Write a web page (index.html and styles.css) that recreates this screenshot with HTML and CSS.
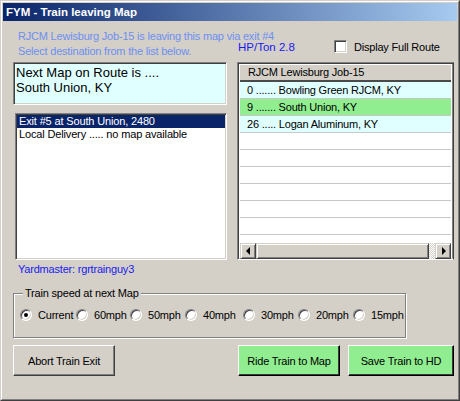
FILE: index.html
```html
<!DOCTYPE html>
<html>
<head>
<meta charset="utf-8">
<title>FYM - Train leaving Map</title>
<link rel="stylesheet" href="styles.css">
</head>
<body>
<div class="window">
  <div class="frame">
    <div class="titlebar">FYM - Train leaving Map</div>
    <div class="client">
      <div class="top">
        <div class="left">
          <div class="info">
            <div>RJCM Lewisburg Job-15 is leaving this map via exit #4</div>
            <div>Select destination from the list below.</div>
          </div>
          <div class="nextmap sunken">Next Map on Route is ....<br>South Union, KY</div>
          <ul class="listbox sunken">
            <li class="sel">Exit #5 at South Union, 2480</li>
            <li>Local Delivery ..... no map available</li>
          </ul>
          <div class="yard">Yardmaster: rgrtrainguy3</div>
        </div>
        <div class="right">
          <div class="hprow">
            <span class="hp">HP/Ton 2.8</span>
            <span class="check"></span>
            <span class="checklabel">Display Full Route</span>
          </div>
          <div class="grid sunken">
            <div class="ghead">RJCM Lewisburg Job-15</div>
            <div class="rows">
              <div class="grow cyan">0 ....... Bowling Green RJCM, KY</div>
              <div class="grow green">9 ....... South Union, KY</div>
              <div class="grow cyan">26 ..... Logan Aluminum, KY</div>
              <div class="grow"></div>
              <div class="grow"></div>
              <div class="grow"></div>
              <div class="grow"></div>
              <div class="grow"></div>
              <div class="grow"></div>
              <div class="grow"></div>
            </div>
            <div class="hscroll">
              <div class="sbtn"><span class="arr-left"></span></div>
              <div class="thumb"></div>
              <div class="track"></div>
              <div class="sbtn"><span class="arr-right"></span></div>
            </div>
          </div>
        </div>
      </div>
      <div class="group">
        <span class="legend">Train speed at next Map</span>
        <div class="opts">
          <label class="opt"><span class="radio on"></span><span>Current</span></label>
          <label class="opt"><span class="radio"></span><span>60mph</span></label>
          <label class="opt"><span class="radio"></span><span>50mph</span></label>
          <label class="opt"><span class="radio"></span><span>40mph</span></label>
          <label class="opt"><span class="radio"></span><span>30mph</span></label>
          <label class="opt"><span class="radio"></span><span>20mph</span></label>
          <label class="opt"><span class="radio"></span><span>15mph</span></label>
        </div>
      </div>
      <div class="buttons">
        <div class="btn gray abort">Abort Train Exit</div>
        <div class="rightbtns">
          <div class="btn green ride">Ride Train to Map</div>
          <div class="btn green save">Save Train to HD</div>
        </div>
      </div>
    </div>
  </div>
</div>
</body>
</html>
```
FILE: styles.css
```css
html, body {
  margin: 0;
  padding: 0;
  background: #d4d0c8;
}
body {
  font-family: "Liberation Sans", Arial, sans-serif;
  font-size: 11px;
  letter-spacing: -0.2px;
  color: #000;
}
.window {
  width: 460px;
  height: 401px;
  box-sizing: border-box;
  border: 1px solid;
  border-color: #d4d0c8 #404040 #404040 #d4d0c8;
  background: #d4d0c8;
}
.frame {
  height: 100%;
  box-sizing: border-box;
  border: 1px solid;
  border-color: #fff #808080 #808080 #fff;
  padding: 1px;
}
.titlebar {
  height: 18px;
  line-height: 18px;
  background: linear-gradient(to right, #0a246a, #a6caf0);
  color: #fff;
  font-weight: bold;
  font-size: 11.5px;
  letter-spacing: 0;
  padding-left: 3px;
}
.client {
  padding: 0 3px 0 10px;
}
.top {
  display: grid;
  grid-template-columns: 214px 217px;
  column-gap: 10px;
}
.sunken {
  box-sizing: border-box;
  border: 1px solid;
  border-color: #808080 #fff #fff #808080;
  box-shadow: inset 1px 1px 0 #404040, inset -1px -1px 0 #d4d0c8;
}
.info {
  margin-top: 8px;
  padding-left: 5px;
  line-height: 15px;
  white-space: nowrap;
  color: #6d8ff0;
}
.nextmap {
  margin-top: 3px;
  height: 43px;
  background: #e0ffff;
  font-size: 13px;
  line-height: 15px;
  letter-spacing: 0;
  padding: 2px 0 0 2px;
}
.listbox {
  list-style: none;
  margin: 8px 0 0 2px;
  padding: 1px;
  height: 147px;
  background: #fff;
  letter-spacing: -0.15px;
}
.listbox li {
  height: 13px;
  line-height: 13px;
  padding-left: 2px;
  white-space: nowrap;
}
.listbox li.sel {
  background: #0a246a;
  color: #fff;
}
.yard {
  margin-top: 2px;
  padding-left: 5px;
  line-height: 14px;
  color: #1a1af0;
}
.hprow {
  margin-top: 19px;
  height: 13px;
  display: flex;
  align-items: center;
}
.hp {
  width: 97px;
  padding-left: 1px;
  box-sizing: border-box;
  font-size: 11.5px;
  color: #1a1af0;
  letter-spacing: 0;
}
.check {
  width: 13px;
  height: 13px;
  box-sizing: border-box;
  background: #fff;
  border: 1px solid;
  border-color: #808080 #fff #fff #808080;
  box-shadow: inset 1px 1px 0 #404040, inset -1px -1px 0 #d4d0c8;
}
.checklabel {
  margin-left: 7px;
}
.grid {
  margin-top: 9px;
  height: 198px;
  padding: 2px;
  background: #fff;
  display: flex;
  flex-direction: column;
  border-right-color: #404040;
  box-shadow: inset 1px 1px 0 #404040, inset 0 -1px 0 #d4d0c8, inset -1px 0 0 #808080;
}
.ghead {
  height: 15px;
  line-height: 15px;
  background: #d4d0c8;
  border-bottom: 2px solid #4a4a4a;
  padding-left: 8px;
  flex: none;
}
.rows {
  height: 161px;
  overflow: hidden;
  flex: none;
}
.grow {
  height: 16px;
  line-height: 16px;
  border-bottom: 1px solid #c8c8c8;
  padding-left: 7px;
  white-space: nowrap;
}
.grow.cyan { background: #e0ffff; }
.grow.green { background: #90ee90; }
.hscroll {
  height: 16px;
  display: flex;
  flex: none;
}
.sbtn, .thumb {
  box-sizing: border-box;
  height: 16px;
  background: #d4d0c8;
  border: 1px solid;
  border-color: #d4d0c8 #404040 #404040 #d4d0c8;
  box-shadow: inset 1px 1px 0 #fff, inset -1px -1px 0 #808080;
}
.sbtn {
  width: 16px;
  display: flex;
  align-items: center;
  justify-content: center;
}
.thumb {
  width: 173px;
}
.track {
  flex: 1;
  background-color: #fff;
  background-image: repeating-conic-gradient(#d4d0c8 0 25%, #fff 0 50%);
  background-size: 2px 2px;
}
.arr-left {
  width: 0;
  height: 0;
  border-right: 4px solid #000;
  border-top: 4px solid transparent;
  border-bottom: 4px solid transparent;
  margin-right: 1px;
}
.arr-right {
  width: 0;
  height: 0;
  border-left: 4px solid #000;
  border-top: 4px solid transparent;
  border-bottom: 4px solid transparent;
  margin-left: 1px;
}
.group {
  position: relative;
  margin-top: 17px;
  width: 393px;
  height: 45px;
  box-sizing: border-box;
  border: 1px solid #808080;
  box-shadow: 1px 1px 0 #fff, inset 1px 1px 0 #fff;
}
.legend {
  position: absolute;
  top: -8px;
  left: 9px;
  padding: 0 2px;
  line-height: 14px;
  background: #d4d0c8;
}
.opts {
  display: flex;
  align-items: center;
  height: 13px;
  padding: 14px 0 0 6px;
}
.opt {
  display: flex;
  align-items: center;
  width: 55px;
  flex: none;
}
.opt:nth-child(1) { width: 56px; }
.opt:nth-child(2) { width: 54px; }
.opt:nth-child(4) { width: 58px; }
.opt:last-child { width: auto; }
.opt span:last-child {
  margin-left: 6px;
}
.radio {
  position: relative;
  width: 12px;
  height: 12px;
  box-sizing: border-box;
  border-radius: 50%;
  background: #fff;
  border: 1px solid;
  border-color: #808080 #fff #fff #808080;
  box-shadow: inset 1px 1px 0 #404040, inset -1px -1px 0 #d4d0c8;
  flex: none;
}
.radio.on::after {
  content: "";
  position: absolute;
  left: 3px;
  top: 3px;
  width: 4px;
  height: 4px;
  border-radius: 50%;
  background: #000;
}
.buttons {
  margin-top: 7px;
  display: flex;
}
.rightbtns {
  margin-left: auto;
  display: flex;
  gap: 8px;
}
.btn {
  height: 31px;
  box-sizing: border-box;
  border: 1px solid;
  display: flex;
  align-items: center;
  justify-content: center;
  white-space: nowrap;
}
.btn.gray {
  background: #d4d0c8;
  border-color: #fff #404040 #404040 #fff;
  box-shadow: inset -1px -1px 0 #808080;
}
.btn.green {
  background: #90ee90;
  border-color: #fff #000 #000 #fff;
  box-shadow: inset -1px -1px 0 #3a3a3a;
}
.abort { width: 102px; }
.ride { width: 102px; }
.save { width: 106px; }
```
